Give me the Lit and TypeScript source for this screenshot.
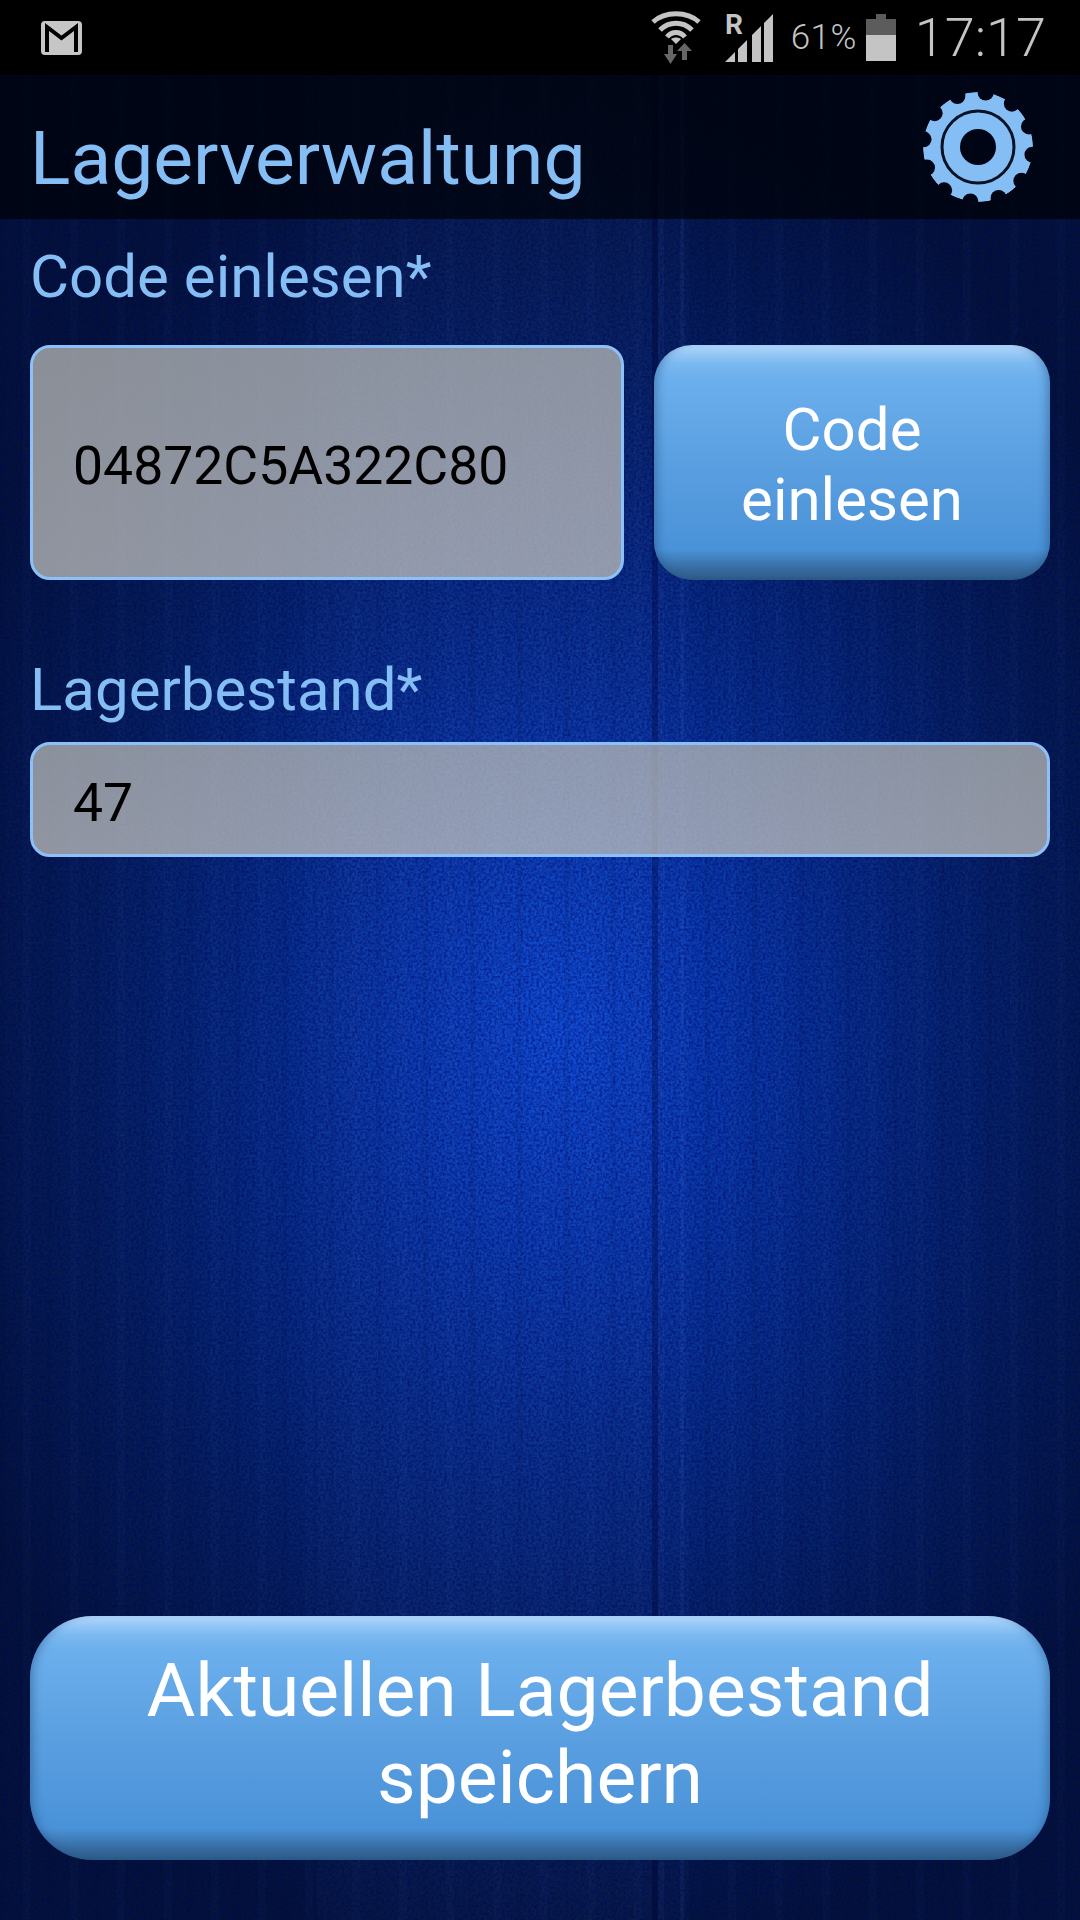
import { LitElement, html, svg, css, unsafeCSS } from "lit";
import { customElement } from "lit/decorators.js";

// texture for the wallpaper, svg only, no raster
const NOISE =
  "url(\"data:image/svg+xml,%3Csvg xmlns='http://www.w3.org/2000/svg' width='500' height='500'%3E%3Cfilter id='n'%3E%3CfeTurbulence type='fractalNoise' baseFrequency='.38' numOctaves='3' seed='4'/%3E%3CfeColorMatrix values='0 0 0 0 0 0 0 0 0 0 0 0 0 0 .12 0 0 0 1.15 -.36'/%3E%3C/filter%3E%3Crect width='500' height='500' filter='url(%23n)'/%3E%3C/svg%3E\")";

const gearNotches = Array.from({ length: 12 }, (_, i) => {
  const a = ((i * 30 + 8) * Math.PI) / 180;
  return { x: 55 + Math.cos(a) * 55, y: 55 + Math.sin(a) * 55 };
});

@customElement("status-bar")
export class StatusBar extends LitElement {
  static styles = css`
    :host {
      display: flex;
      align-items: center;
      height: 75px;
      background: #000;
      color: #c4c4c4;
      font-family: Roboto, "Liberation Sans", sans-serif;
      box-sizing: border-box;
      padding: 0 34px 0 41px;
    }
    svg {
      display: block;
      flex: none;
    }
    .spacer {
      flex: 1;
    }
    .wifi {
      margin-right: 24px;
    }
    .signal {
      margin-right: 18px;
    }
    .pct {
      font-size: 35px;
      font-weight: 300;
      letter-spacing: 0.5px;
      margin-right: 9px;
    }
    .battery {
      margin-right: 19px;
    }
    .clock {
      font-size: 54px;
      font-weight: 300;
    }
  `;

  render() {
    return html`
      <svg width="41" height="34" viewBox="0 0 41 34">
        <rect width="41" height="34" rx="4" fill="#c6c6c6" />
        <path d="M6 31V6l14.5 11L35 6v25" fill="none" stroke="#000" stroke-width="4" />
      </svg>
      <div class="spacer"></div>
      <svg class="wifi" width="50" height="54" viewBox="0 0 50 54">
        <g fill="none" stroke="#c4c4c4" stroke-width="5">
          <path d="M2 11C14 0 36 0 48 11" />
          <path d="M9 19C18 10 32 10 41 19" />
          <path d="M16 26C21 20 29 20 34 26" />
        </g>
        <path d="M20 28c3-2 7-2 10 0l-5 5z" fill="#c4c4c4" />
        <path d="M17 34h5v9h4l-6.500 10L13 43h4z" fill="#666" />
        <path d="M33.500 32L41 40h-5v9h-5v-9h-5z" fill="#666" />
      </svg>
      <svg class="signal" width="48" height="60" viewBox="0 -6 48 60">
        <path d="M0 48l10-10v10zM13 35l9-9v22h-9zM27 21l9-9v36h-9zM39 9l9-9v48h-9z" fill="#c4c4c4" />
        <text x="0" y="20" font-family="Roboto" font-weight="700" font-size="28" fill="#c4c4c4">R</text>
      </svg>
      <span class="pct">61%</span>
      <svg class="battery" width="30" height="47" viewBox="0 0 30 47">
        <path d="M10 0h10v5h10v16H0V5h10z" fill="#5c5c5c" />
        <rect y="21" width="30" height="26" fill="#c4c4c4" />
      </svg>
      <span class="clock">17:17</span>
    `;
  }
}

@customElement("app-root")
export class AppRoot extends LitElement {
  static styles = css`
    :host {
      display: block;
      width: 1080px;
      height: 1920px;
      font-family: Roboto, "Liberation Sans", sans-serif;
      background-color: #031230;
      background-image: ${unsafeCSS(NOISE)},
        linear-gradient(
          90deg,
          transparent 0 317px,
          rgba(90, 130, 230, 0.04) 317px 652px,
          rgba(0, 0, 30, 0.28) 652px 658px,
          rgba(80, 130, 240, 0.1) 658px 664px,
          rgba(60, 100, 220, 0.04) 664px 680px,
          rgba(80, 130, 240, 0.1) 680px 684px,
          transparent 684px
        ),
        repeating-linear-gradient(
          90deg,
          rgba(0, 0, 30, 0.07) 0 5px,
          transparent 5px 23px,
          rgba(90, 130, 220, 0.03) 23px 31px,
          transparent 31px 47px
        ),
        radial-gradient(
          ellipse 660px 960px at 560px 1030px,
          #0d4ed8 0%,
          #0a3fb4 22%,
          #073088 45%,
          #052158 72%,
          #031433 100%
        );
    }
    .page {
      display: flex;
      flex-direction: column;
      height: 1920px;
    }
    .header {
      display: flex;
      align-items: center;
      justify-content: space-between;
      height: 144px;
      box-sizing: border-box;
      padding: 0 47px 0 30px;
      background: rgba(0, 1, 6, 0.72);
      color: #85bdf5;
    }
    h1 {
      margin: 0;
      font-size: 75px;
      font-weight: 400;
      line-height: 1;
      padding-top: 22px;
    }
    .gear {
      display: block;
    }
    .content {
      flex: 1;
      display: flex;
      flex-direction: column;
      padding: 30px 30px 60px;
    }
    label {
      display: block;
      font-size: 60px;
      line-height: 56px;
      color: #85bdf5;
    }
    .code-row {
      display: flex;
      gap: 30px;
      margin-top: 40px;
    }
    .field {
      box-sizing: border-box;
      display: flex;
      align-items: center;
      border: 3px solid #8dc0f6;
      border-radius: 20px;
      padding: 5px 0 0 40px;
      color: #000;
      font-size: 53.5px;
      background: linear-gradient(
        rgba(186, 188, 184, 0.74),
        rgba(194, 194, 190, 0.74)
      );
    }
    .code-field {
      width: 594px;
      height: 235px;
    }
    .stock-label {
      margin-top: 82px;
    }
    .stock-field {
      height: 115px;
      margin-top: 24px;
    }
    .btn {
      box-sizing: border-box;
      display: flex;
      align-items: center;
      justify-content: center;
      text-align: center;
      color: #fff;
      background: linear-gradient(
        #b0d6fb 0%,
        #7ab8f0 8%,
        #6cafed 14%,
        #5a9fe0 50%,
        #4a92d8 87%,
        #35689c 96%,
        #2c5a88 100%
      );
      box-shadow: inset 10px 0 10px -7px rgba(30, 70, 120, 0.45),
        inset -10px 0 10px -7px rgba(30, 70, 120, 0.45);
    }
    .btn-small {
      width: 396px;
      height: 235px;
      border-radius: 38px;
      font-size: 60px;
      line-height: 70px;
      padding-top: 4px;
    }
    .btn-large {
      margin-top: auto;
      height: 244px;
      border-radius: 62px;
      font-size: 75px;
      line-height: 87px;
      padding-bottom: 8px;
    }
  `;

  render() {
    return html`
      <div class="page">
        <status-bar></status-bar>
        <div class="header">
          <h1>Lagerverwaltung</h1>
          <svg class="gear" width="110" height="110" viewBox="0 0 110 110">
            <defs>
              <mask id="gear-cut">
                <circle cx="55" cy="55" r="55" fill="#fff" />
                ${gearNotches.map((n) => svg`<circle cx=${n.x} cy=${n.y} r="8" fill="#000" />`)}
                <circle cx="55" cy="55" r="18" fill="#000" />
              </mask>
            </defs>
            <circle cx="55" cy="55" r="55" fill="#85bdf5" mask="url(#gear-cut)" />
            <circle cx="55" cy="55" r="36" fill="none" stroke="#061224" stroke-width="3" />
          </svg>
        </div>
        <div class="content">
          <label>Code einlesen*</label>
          <div class="code-row">
            <div class="field code-field">04872C5A322C80</div>
            <div class="btn btn-small">Code<br />einlesen</div>
          </div>
          <label class="stock-label">Lagerbestand*</label>
          <div class="field stock-field">47</div>
          <div class="btn btn-large">Aktuellen Lagerbestand<br />speichern</div>
        </div>
      </div>
    `;
  }
}
